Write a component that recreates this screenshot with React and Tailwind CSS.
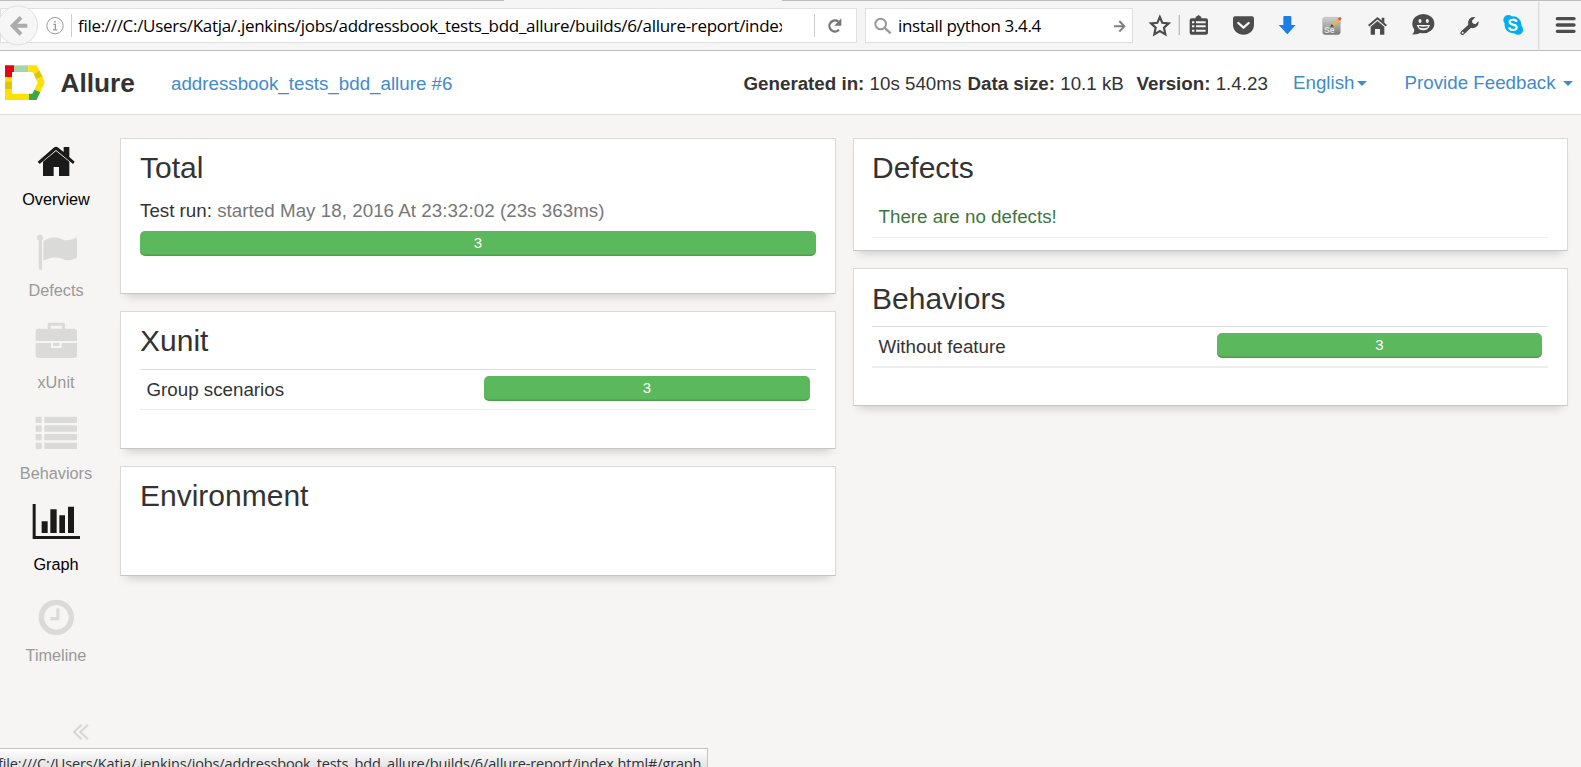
import React from "react";

const INK = "#4c4c4c";

function ToolIcon({ from, to, children }) {
  return (
    <svg
      className="h-[50px] shrink-0 overflow-visible"
      style={{ width: (to - from) / 3 }}
      viewBox={`${from} 0 ${to - from} 150`}
      fill="none"
    >
      {children}
    </svg>
  );
}

function BrowserBar() {
  return (
    <div className="relative h-[51px] shrink-0 border-b border-[#bdbdbd] bg-[#f5f5f5] font-['Open_Sans','Noto_Sans',sans-serif] text-black">
      <div className="absolute left-0 top-0 h-px w-[504px] bg-[#bdbdbd]" />
      <div className="absolute left-[782px] right-0 top-0 h-px bg-[#bdbdbd]" />
      <div className="flex h-[50px]">
        <div className="relative mt-2 flex h-[35px] w-[857px] items-center border border-[#e0e0e0] bg-white">
          <svg className="absolute left-[-4px] top-[-4px] h-[41px] w-[44px]" viewBox="-9 14 132 123" fill="none">
            <circle cx="54" cy="75" r="58.5" fill="#f6f6f6" stroke="#e0e0e0" strokeWidth="3" />
            <path d="M82 76.500H40M63 51L38 76.500L63 102" stroke="#acacac" strokeWidth="12" />
          </svg>
          <svg className="ml-[44px] h-[20px] w-[20px] shrink-0" viewBox="135 46 60 60" fill="none">
            <circle cx="165" cy="75" r="24.500" stroke="#999" strokeWidth="3" />
            <path d="M160 71h6v16M159 87.500h13M165 61v5" stroke="#999" strokeWidth="4" />
          </svg>
          <div className="ml-[6px] h-[23px] w-px bg-[#ccc]" />
          <div className="ml-[6px] w-[704px] overflow-hidden whitespace-pre text-[17px] leading-[27px] tracking-[-0.3px]">
            file:///C:/Users/Katja/.jenkins/jobs/addressbook_tests_bdd_allure/builds/6/allure-report/index
          </div>
          <div className="ml-[32px] h-[23px] w-px bg-[#ccc]" />
          <svg className="ml-[11px] h-[20px] w-[18px]" viewBox="1070 48 54 60" fill="none">
            <path d="M1107 65A16.500 16.500 0 1 0 1109 89" stroke="#777" strokeWidth="7" />
            <path d="M1116 55V77H1095Z" fill="#777" />
          </svg>
        </div>
        <div className="ml-[8px] mt-2 flex h-[35px] w-[268px] items-center border border-[#e0e0e0] bg-white">
          <svg className="ml-[8px] h-[20px] w-[18px]" viewBox="72 46 54 60" fill="none">
            <circle cx="92" cy="70" r="16" stroke="#999" strokeWidth="6" />
            <path d="M103 81L122 98" stroke="#999" strokeWidth="7" />
          </svg>
          <div className="ml-[6px] w-[208px] whitespace-pre text-[17px] leading-[27px] tracking-[-0.35px]">install python 3.4.4</div>
          <svg className="ml-[7px] h-[20px] w-[14px]" viewBox="788 46 42 60" fill="none">
            <path d="M791 77H820M807 61L822 77L807 93" stroke="#808080" strokeWidth="6" />
          </svg>
        </div>
        <div className="ml-[13.500px] flex">
          <ToolIcon from={50} to={147}>
            <path d="M88.500 51L96 68.500L115 70L101 83L105 103L88.500 93L72 103L76 83L62 70L81 68.500Z" stroke={INK} strokeWidth="6.500" />
            <path d="M147 45V105" stroke="#bbb" strokeWidth="4" />
          </ToolIcon>
          <ToolIcon from={147} to={270}>
            <path d="M197 55V51L206 45L214 51V55H228Q234 55 234 61V98Q234 104 228 104H185Q179 104 179 98V61Q179 55 185 55Z" fill={INK} />
            <path d="M186 67h7M186 79h7M186 92h7M198 67h29M198 79h29M198 92h29" stroke="#f5f5f5" strokeWidth="6" />
          </ToolIcon>
          <ToolIcon from={270} to={410}>
            <path d="M315 49H366Q372 49 372 56V74C372 91 358 104 340.500 104C323 104 309 91 309 74V56Q309 49 315 49Z" fill={INK} />
            <path d="M325 69L340.500 83L356 69" stroke="#f5f5f5" strokeWidth="7" strokeLinecap="round" strokeLinejoin="round" />
          </ToolIcon>
          <ToolIcon from={410} to={545}>
            <path d="M462 51Q462 48 465 48H483Q486 48 486 51V75H499L474 103L448 75H462Z" fill="#1a7fe8" />
          </ToolIcon>
          <ToolIcon from={545} to={675}>
            <defs>
              <linearGradient id="se" x1="0" y1="0" x2="0" y2="1">
                <stop offset="0" stopColor="#d0d0d0" />
                <stop offset="0.5" stopColor="#a8a8a8" />
                <stop offset="1" stopColor="#777" />
              </linearGradient>
            </defs>
            <rect x="580" y="52" width="53" height="52" rx="7" fill="url(#se)" stroke="#999" strokeWidth="1" />
            <text x="584" y="98" fontFamily="Liberation Sans" fontWeight="700" fontSize="26" fill="#e4e4e4">Se</text>
            <path d="M609 76L631 56" stroke="#e8b93c" strokeWidth="8" />
            <path d="M628 59L635 53" stroke="#c9605a" strokeWidth="8" />
            <path d="M603 82L607 72L614 79Z" fill="#444" />
          </ToolIcon>
          <ToolIcon from={675} to={808}>
            <path d="M716 77L742.500 55L769 77" stroke={INK} strokeWidth="6" />
            <path d="M755 53h8v17l-8-7zM722 80L742.500 63L763 80V104H750V87H735V104H722Z" fill={INK} />
          </ToolIcon>
          <ToolIcon from={808} to={945}>
            <ellipse cx="881" cy="71" rx="33" ry="29" fill={INK} />
            <path d="M853 83Q856 97 847 103Q865 105 877 95Z" fill={INK} />
            <ellipse cx="871" cy="63" rx="4.500" ry="6" fill="#f5f5f5" />
            <ellipse cx="893" cy="63" rx="4.500" ry="6" fill="#f5f5f5" />
            <path d="M861 75H901Q896 91 881 91Q866 91 861 75Z" fill="#f5f5f5" />
            <path d="M868 80Q881 85 894 80" stroke={INK} strokeWidth="4" />
          </ToolIcon>
          <ToolIcon from={945} to={1085}>
            <path d="M997 99L1024 74" stroke={INK} strokeWidth="12" strokeLinecap="round" />
            <path d="M1036 52Q1026 48 1018 57Q1012 65 1015 76L1024 84Q1035 86 1042 78Q1047 72 1046 64L1036 73L1027 70L1026 62Z" fill={INK} />
            <circle cx="998" cy="98" r="3" fill="#f5f5f5" />
          </ToolIcon>
          <ToolIcon from={1085} to={1228}>
            <circle cx="1151" cy="74" r="25.500" fill="#00aff0" />
            <circle cx="1137" cy="60" r="15" fill="#00aff0" />
            <circle cx="1166" cy="89" r="15.500" fill="#00aff0" />
            <path d="M1163 65Q1158 58 1150 59Q1140 60 1141 67Q1142 72 1151 74Q1162 76 1162 82Q1162 90 1151 90Q1142 90 1139 82" stroke="#fff" strokeWidth="6.500" />
            <path d="M1228.500 6V147" stroke="#d2d2d2" strokeWidth="3" />
          </ToolIcon>
          <ToolIcon from={1228} to={1353}>
            <path d="M1283 56H1333M1283 75H1333M1283 94H1333" stroke={INK} strokeWidth="10" strokeLinecap="round" />
          </ToolIcon>
        </div>
      </div>
    </div>
  );
}

function Caret() {
  return <div className="mt-[2px] h-0 w-0 border-x-[5px] border-t-[5px] border-x-transparent border-t-[#428bca]" />;
}

function Header() {
  return (
    <header className="flex h-[64px] shrink-0 items-center whitespace-pre border-b border-[#ddd] bg-white pt-[2px] text-[18.75px] leading-[27px]">
      <svg className="mb-[2px] ml-[4px] h-[37.300px] w-[41.300px] shrink-0" viewBox="12 192 124 112">
        <path d="M15 196H42V216H36V231H15Z" fill="#e30613" />
        <path d="M42 196H85V216H42Z" fill="#a8d5a5" />
        <path d="M85 196H110L118 211L102 223L97 216H85Z" fill="#ffe100" />
        <path d="M118 211L128 230L108 238L102 223Z" fill="#dcc50a" />
        <path d="M128 230L134 248L121 276L103 269L113 248L108 238Z" fill="#ffe100" />
        <path d="M121 276L110 300H86V281H97L103 269Z" fill="#3fa845" />
        <path d="M15 231H36V244H15ZM15 267H36V281H86V300H15Z" fill="#ffe100" />
        <path d="M15 244H36V267H15Z" fill="#dcc50a" />
      </svg>
      <div className="ml-[15.200px] w-[110.500px] text-[26.250px] font-bold">Allure</div>
      <div className="w-[572.500px] text-[#428bca]">addressbook_tests_bdd_allure #6</div>
      <div className="w-[224px]"><b>Generated in:</b> 10s 540ms</div>
      <div className="w-[169px]"><b>Data size:</b> 10.1 kB</div>
      <div className="w-[156.500px]"><b>Version:</b> 1.4.23</div>
      <div className="mb-[2px] flex w-[111.500px] items-center gap-[3px] text-[#428bca]">English<Caret /></div>
      <div className="mb-[2px] flex items-center gap-[7px] text-[#428bca]">Provide Feedback<Caret /></div>
    </header>
  );
}

const NAV = [
  {
    label: "Overview", y: 60, active: true,
    icon: (
      <>
        <path d="M129 125L168 93L208 125V168H177V141H161V168H129Z" />
        <path d="M113 125L161 83Q168 77 175 83L191 96V81H208V111L224 125L219 132L168 90L119 132Z" />
      </>
    ),
  },
  {
    label: "Defects", y: 333.6,
    icon: (
      <>
        <circle cx="120" cy="354" r="9" />
        <path d="M116 358H126V447Q126 450 123 450H119Q116 450 116 447Z" />
        <path d="M130 363C146 353 166 349 183 357C200 366 213 360 231 353V413C215 422 203 425 186 417C166 409 149 413 130 423Z" />
      </>
    ),
  },
  {
    label: "xUnit", y: 606,
    icon: (
      <>
        <path fillRule="evenodd" d="M143 626V613Q143 608 148 608H190Q195 608 195 613V626H223Q231 626 231 634V663H107V634Q107 626 115 626ZM152 617V626H186V617Z" />
        <path d="M107 669H153V684H185V669H231V706Q231 714 223 714H115Q107 714 107 706Z" />
        <path d="M159 669H178V678H159Z" />
      </>
    ),
  },
  {
    label: "Behaviors", y: 42,
    icon: (
      <>
        {[50, 76, 102, 128].map((y) => (
          <g key={y}>
            <rect x="107" y={y} width="18" height="19" rx="2" />
            <rect x="133" y={y} width="98" height="19" rx="2" />
          </g>
        ))}
      </>
    ),
  },
  {
    label: "Graph", y: 315, active: true,
    icon: <path d="M98 312H107V408H240V417H98ZM125 364H143V399H125ZM151 328H170V399H151ZM178 346H195V399H178ZM204 320H222V399H204Z" />,
  },
  {
    label: "Timeline", y: 588,
    icon: (
      <>
        <path fillRule="evenodd" d="M169 599A53 53 0 1 1 168.900 599ZM169 615A37 37 0 1 0 169.100 615Z" />
        <path d="M169 627Q169 625 171 625H176Q178 625 178 627V661H153Q151 661 151 659V653Q151 651 153 651H169Z" />
      </>
    ),
  },
];

function Sidebar() {
  return (
    <nav className="flex w-[112px] shrink-0 flex-col pt-[25px]">
      {NAV.map((n) => (
        <div
          key={n.label}
          className={
            "flex h-[91.200px] flex-col items-center text-[16.250px] leading-[20px] " +
            (n.active ? "text-black" : "text-[#999]")
          }
        >
          <svg className="h-[40px] w-[48px] shrink-0 overflow-visible" viewBox={`96 ${n.y} 144 120`} fill={n.active ? "#1a1a1a" : "#dadad8"}>
            {n.icon}
          </svg>
          <div className="mt-[9.150px]">{n.label}</div>
        </div>
      ))}
      <svg className="ml-[72px] mt-[36px] h-[18px] w-[18px]" viewBox="216 968 54 54" fill="none" stroke="#d6d6d4" strokeWidth="6">
        <path d="M245 973L222 995L245 1017M264 973L241 995L264 1017" />
      </svg>
    </nav>
  );
}

function Card({ title, className, children }) {
  return (
    <section className={"flex flex-col border border-[#d9d9d9] border-b-[#c6c6c6] bg-white pr-[19px] shadow-[0_8px_9px_-6px_rgba(0,0,0,0.18)] " + className}>
      <h2 className="text-[30px] leading-[33px]">{title}</h2>
      {children}
    </section>
  );
}

function Bar({ className, value }) {
  return (
    <div className={"h-[25px] rounded-[5px] bg-[#5cb85c] text-center text-[15px] leading-[24px] text-white shadow-[inset_0_-1.500px_0_rgba(0,0,0,0.15)] " + className}>
      {value}
    </div>
  );
}

function Row({ label, value, className, barClass }) {
  return (
    <div className={"flex justify-between border-t border-t-[#ddd] border-b-[#eee] pb-[8px] pl-[6.500px] pr-[6px] pt-[6px] " + className}>
      <div className="h-[25px] leading-[27px]">{label}</div>
      <Bar value={value} className={barClass} />
    </div>
  );
}

export default function App() {
  return (
    <div className="relative flex h-[767px] w-[1581px] flex-col overflow-hidden bg-[#f6f5f3] font-['Liberation_Sans',Arial,sans-serif] text-[18.75px] text-[#333]">
      <BrowserBar />
      <Header />
      <div className="flex flex-1">
        <Sidebar />
        <main className="ml-[8px] flex gap-[17px] pt-[23px]">
          <div className="flex w-[716px] flex-col">
            <Card title="Total" className="h-[156px] pl-[19px] pt-[12px]">
              <p className="mt-[13px] leading-[27px]">
                Test run: <span className="tracking-[0.040px] text-[#777]">started May 18, 2016 At 23:32:02 (23s 363ms)</span>
              </p>
              <Bar value="3" className="mt-[7px]" />
            </Card>
            <Card title="Xunit" className="mt-[17px] h-[138px] pl-[19px] pt-[12px]">
              <Row label="Group scenarios" value="3" className="mt-[12px] border-b" barClass="w-[326px]" />
            </Card>
            <Card title="Environment" className="mt-[17px] h-[110px] pl-[19px] pt-[12px]" />
          </div>
          <div className="flex w-[715px] flex-col">
            <Card title="Defects" className="h-[113px] pl-[18px] pt-[12px]">
              <p className="mt-[19px] border-b border-[#eee] pb-[7px] pl-[6.500px] leading-[27px] text-[#3c763d]">There are no defects!</p>
            </Card>
            <Card title="Behaviors" className="mt-[17px] h-[138px] pl-[18px] pt-[13px]">
              <Row label="Without feature" value="3" className="mt-[11px] border-b-2" barClass="w-[325px]" />
            </Card>
          </div>
        </main>
      </div>
      <div className="absolute left-0 top-[748px] h-[19px] w-[708px] overflow-hidden border-r border-t border-[#c4c4c4] bg-linear-to-b from-white to-[#e4e4e4]">
        <div className="-ml-[2px] mt-[5px] whitespace-pre font-['Open_Sans','Noto_Sans',sans-serif] text-[14.500px] leading-[20px] tracking-[-0.14px]">
          file:///C:/Users/Katja/.jenkins/jobs/addressbook_tests_bdd_allure/builds/6/allure-report/index.html#/graph
        </div>
      </div>
    </div>
  );
}
